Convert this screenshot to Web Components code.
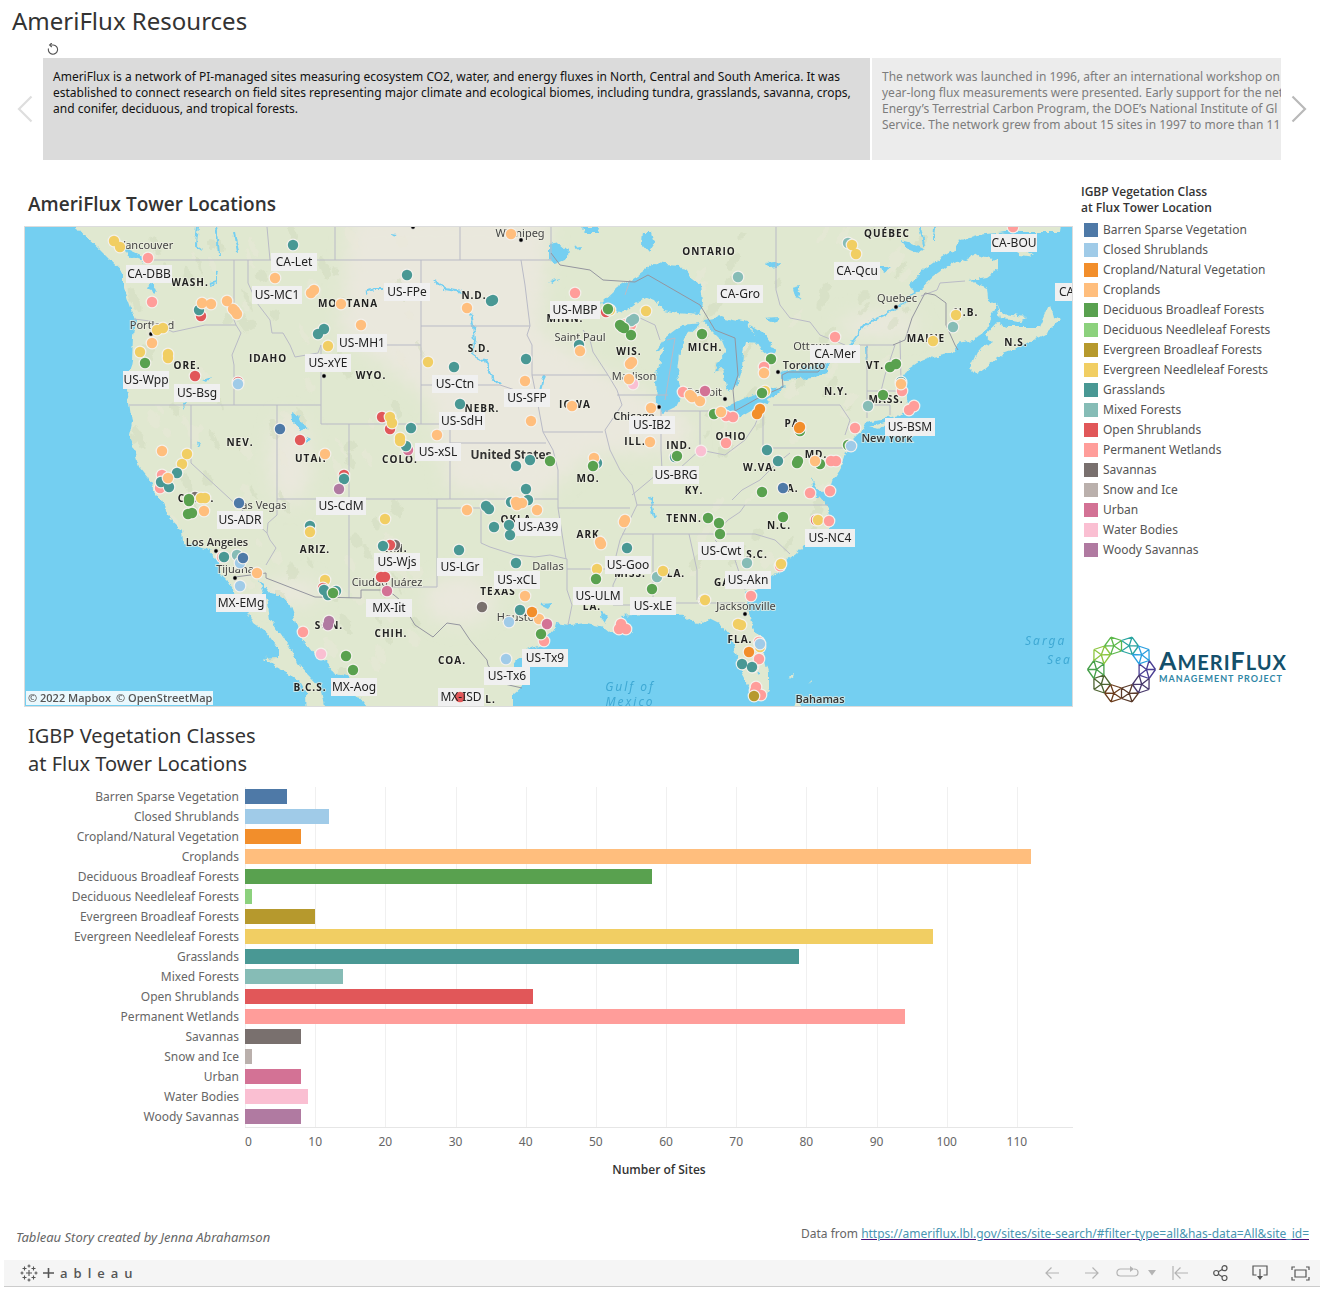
<!DOCTYPE html>
<html lang="en">
<head>
<meta charset="utf-8">
<title>AmeriFlux Resources</title>
<style>
body{margin:0;background:#fff;color:#333;font-family:"Noto Sans","Open Sans",sans-serif;font-size:12px;line-height:16px}
</style>
</head>
<body>
<story-page></story-page>
<script>
const CLASSES=[
 ['Barren Sparse Vegetation','#4e79a7',6],['Closed Shrublands','#a0cbe8',12],['Cropland/Natural Vegetation','#f28e2b',8],
 ['Croplands','#ffbe7d',112],['Deciduous Broadleaf Forests','#59a14f',58],['Deciduous Needleleaf Forests','#8cd17d',1],
 ['Evergreen Broadleaf Forests','#b6992d',10],['Evergreen Needleleaf Forests','#f1ce63',98],['Grasslands','#499894',79],
 ['Mixed Forests','#86bcb6',14],['Open Shrublands','#e15759',41],['Permanent Wetlands','#ff9d9a',94],['Savannas','#79706e',8],
 ['Snow and Ice','#bab0ac',1],['Urban','#d37295',8],['Water Bodies','#fabfd2',9],['Woody Savannas','#b07aa1',8]];

function define(name,html){
  customElements.define(name,class extends HTMLElement{
    constructor(){super();this.attachShadow({mode:'open'});}
    connectedCallback(){this.shadowRoot.innerHTML=typeof html==='function'?html(this):html;}
  });
}

define('story-point',`<style>
:host{display:block;flex:0 0 calc((100% + 416px)/2);box-sizing:border-box;height:102px;padding:11px 10px;background:#ececec;color:#7c7c7c;white-space:nowrap}
:host([active]){background:#dbdbdb;color:#111}
</style><slot></slot>`);

define('story-nav',`<style>
:host{display:block}
.reset{margin:0 0 3px 47px}
button{border:0;background:none;padding:0;display:block;line-height:0}
.row{display:flex;align-items:center}
.arrow{flex:0 0 auto;width:43px;display:flex;justify-content:center}
.arrow.next{width:48px;justify-content:flex-start;padding-left:10px}
.arrow.prev{padding-left:7px}
.strip{flex:1;min-width:0;display:flex;gap:2px;overflow:hidden}
</style>
<button class="reset" aria-label="Revert"><svg width="12" height="12" viewBox="0 0 12 12" fill="none" stroke="#555" stroke-width="1.1"><path d="M1.5 5.5A4.6 4.6 0 1 0 6.3 2H3"/><path d="M4.8 0 2.6 2l2.2 2"/></svg></button>
<div class="row">
<button class="arrow prev" aria-label="Previous story point"><svg width="16" height="28" viewBox="0 0 16 28" fill="none" stroke="#dedede" stroke-width="2.2"><path d="M14.5 1.500 2 14l12.500 12.500"/></svg></button>
<div class="strip"><slot></slot></div>
<button class="arrow next" aria-label="Next story point"><svg width="16" height="28" viewBox="0 0 16 28" fill="none" stroke="#b9b9b9" stroke-width="2.2"><path d="M1.500 1.500 14 14 1.500 26.500"/></svg></button>
</div>`);

define('color-legend',()=>`<style>
:host{display:block}
h3{margin:0 0 4px;font:600 12px/16px "Open Sans",sans-serif;color:#333}
ul{margin:0;padding:0 0 0 3px;list-style:none}
li{display:flex;align-items:center;gap:5px;height:20px;color:#555}
i{width:14px;height:14px}
</style><h3>IGBP Vegetation Class<br>at Flux Tower Location</h3><ul>${CLASSES.map(c=>`<li><i style="background:${c[1]}"></i>${c[0]}</li>`).join('')}</ul>`);

define('ameriflux-logo',()=>{
  const p=(r,d)=>[34.500+r*Math.cos(d*Math.PI/180),34.500+r*Math.sin(d*Math.PI/180)];
  const wheel=['#4b3f94','#48386b','#5a3a2a','#6b3c1c','#4d6330','#46a04a','#8cc63f','#5cb84a','#2aa5a0','#2a9fe0'];
  let s='';
  for(let k=0;k<10;k++){
    const a=36*k,O=p(34,a),I=p(25,a),M=p(29,a+18),N=p(29,a-18),J=p(18.500,a+18),K=p(18.500,a-18);
    const l=(u,v)=>`M${u.map(n=>n.toFixed(1))}L${v.map(n=>n.toFixed(1))}`;
    s+=`<path stroke="${wheel[k]}" d="${l(O,M)+l(O,N)+l(O,I)+l(I,M)+l(I,N)+l(I,J)+l(I,K)+l(M,J)+l(J,K)}"/>`;
  }
  return `<style>:host{display:block}svg{display:block}text{font-family:Lato,sans-serif;font-weight:700}</style>
<svg width="204" height="70" viewBox="0 0 204 70" role="img" aria-label="AmeriFlux Management Project"><g fill="none" stroke-width="1.300">${s}</g>
<text x="72" y="35" fill="#14506b" font-size="20" letter-spacing="1"><tspan font-size="25">A</tspan>MERI<tspan font-size="25">F</tspan>LUX</text>
<text x="72" y="47" fill="#2f86a6" font-size="9" letter-spacing="1">MANAGEMENT PROJECT</text></svg>`;});

define('bar-chart',()=>`<style>
:host{display:block}
h2{margin:0 0 9px 4px;font-size:20px;line-height:28px;font-weight:400;color:#333}
.chart{display:grid;grid-template-columns:215px minmax(0,1fr);column-gap:6px;color:#666}
.names{text-align:right;line-height:20px;white-space:nowrap}
.plot{border-bottom:1px solid #e6e6e6;background:repeating-linear-gradient(to right,#f0f0f0 0 1px,transparent 1px calc(100%*10/118))}
.slot{height:20px;padding-top:2px;box-sizing:border-box}
.bar{height:15px}
.ticks{grid-column:2;display:grid;grid-template-columns:5fr repeat(11,10fr) 3fr;padding-top:6px;text-align:center}
.ticks span:first-child{text-align:left}
.axis{grid-column:2;text-align:center;padding-top:12px;color:#333;font:600 12px/16px "Open Sans",sans-serif}
</style>
<h2>IGBP Vegetation Classes<br>at Flux Tower Locations</h2>
<div class="chart"><div class="names">${CLASSES.map(c=>`<div>${c[0]}</div>`).join('')}</div>
<div class="plot">${CLASSES.map(c=>`<div class="slot"><div class="bar" style="width:${(c[2]/1.18).toFixed(2)}%;background:${c[1]}"></div></div>`).join('')}</div>
<div class="ticks">${[0,10,20,30,40,50,60,70,80,90,100,110].map(n=>`<span>${n}</span>`).join('')}</div>
<div class="axis">Number of Sites</div></div>`);

const LAND=[
 'M60 216 77 227 87 238 100 250 110 260 123 272 123 283 128 300 135 320 133 337 132 360 127 387 129 403 132 423 129 437 135 450 140 467 148 477 155 492 163 503 167 515 182 530 183 542 193 545 207 548 215 557 220 573 227 580 233 590 238 600 247 610 253 623 267 633 277 647 277 657 265 658 273 665 287 673 300 682 306 693 307 720 327 720 322 690 310 677 297 663 293 653 283 637 270 620 268 603 263 590 260 580 270 593 280 595 290 603 297 623 303 640 313 653 327 663 333 673 350 677 353 690 367 707 372 720 513 720 513 695 522 687 520 673 513 666 517 660 527 650 540 645 553 630 555 623 570 625 587 623 603 627 610 633 633 633 623 620 620 616 633 615 653 613 680 613 697 625 710 618 720 623 730 635 735 653 740 668 745 677 750 690 753 700 763 700 768 690 768 673 763 653 758 637 752 623 748 610 747 593 757 588 770 577 783 570 787 560 797 553 803 545 820 537 830 527 828 507 820 497 830 485 840 470 845 453 853 440 863 430 866 422 887 418 900 415 910 407 903 390 902 377 907 370 917 363 933 357 953 353 958 343 973 340 987 330 990 317 996 306 988 300 987 287 968 280 987 277 997 270 997 260 977 255 953 263 933 277 917 292 910 285 923 270 940 258 953 250 960 240 977 235 1007 232 1060 232 1062 216Z',
 'M970 367 978 350 992 342 985 336 997 323 1007 327 1040 327 1050 305 1053 317 1060 320 1047 333 1020 347 1003 353 983 370 977 374Z',
 'M997 305 1003 314 1027 317 1020 321 1000 319Z','M1008 246 1024 248 1034 256 1020 254Z','M868 428 890 421 880 430Z','M795 707 798 700 803 707Z','M789 677 794 675 793 678Z','M809 681 811 679 810 685Z'];
const LAKES=[
 'M600 303 617 287 637 275 653 263 680 265 690 277 701 285 703 303 700 315 677 313 663 310 655 300 647 297 637 302 627 310 617 312Z',
 'M667 337 683 325 700 323 687 335 680 353 678 373 682 393 675 407 663 413 657 403 656 380 660 360 664 348 655 353Z',
 'M703 320 720 317 747 323 752 332 760 343 745 342 743 352 742 370 737 387 727 391 722 368 715 371 718 362 727 352 722 340 712 330Z',
 'M750 325 763 333 776 350 772 358 762 350Z','M721 412 730 405 747 397 767 390 785 386 775 396 757 407 740 417 725 417Z',
 'M779 373 795 369 827 362 827 372 813 378 785 380Z','M643 232 652 232 655 243 649 252 642 244Z','M549 245 560 243 568 250 567 258 556 263 549 258Z',
 'M291 411 299 415 303 425 308 427 299 430 292 420Z','M307 437 311 439 307 443Z','M122 245 130 250 143 256 146 264 140 260 128 256Z','M147 286 153 281 157 292 154 295 151 288Z',
 'M549 282 560 279 553 284Z','M580 227 600 227 598 233 586 233Z','M574 246 582 245 580 250Z','M392 234 398 235 393 237Z','M880 265 890 268 884 272Z','M900 240 908 242 925 250 918 253 906 248Z','M793 288 801 286 797 296 802 300 795 297Z','M766 264 780 262 778 267 770 268Z','M763 318 778 317 775 322Z',
 'M540 605 552 604 548 609Z','M602 611 609 618 606 624 601 617Z','M811 475 816 488 824 495 818 499 812 486Z','M757 670 762 672 759 676Z','M203 380 211 377 207 382Z','M183 405 187 404 184 409Z','M196 440 200 445 197 446Z'];
const RIVERS='M917 290 900 305 884 315 868 322 850 345M471 313 473 325 475 340 472 353 485 362 493 378 502 385M434 279 445 289 462 292M198 227 196 245 202 250M215 228 218 240 219 258M234 232 238 253M218 269 216 282 210 284M365 292 375 289 384 289M866 347 867 365M650 497 655 518M920 227 924 245M935 227 934 240M545 375 540 395';
const BORDERS='M149 260H551V227M267 227 270 260M335 227V260M460 227V260M234 260V320L236 325M248 260V283L257 303 270 320 272 333 283 333 290 345 295 357 318 353 321 345M321 345V424H450V443H546M421 260V424M340 345H421M134 319 150 321 173 332 205 325H236L241 333 232 355 234 365V405M129 405H321M191 405V463L267 533 270 540 276 548 266 565M277 405V515L268 523 267 533M277 499H558M349 424V598M450 443V499M437 499V587H388M437 508H481V543L490 547 515 555 535 557 550 555 567 559V590L572 605 568 625M567 569H613M558 470V508L566 559M558 508H630M421 326H530M421 385H500L530 395M521 260 525 285 528 310 530 326 527 335 532 345V375L538 405 543 432 553 450 558 470M532 375H608M543 432H603M583 330 590 340 593 352 608 375 617 390 622 405 605 430 610 450 620 470 632 485 637 505 620 540 615 560 620 570 613 585V605H635L640 613M617 395H668M661 410V450L662 470M700 411V450M665 411H720M632 495 650 480 662 470 680 468 700 450 725 455 745 440 755 425 763 405M637 505H828M622 534H755L775 540 790 554M653 534V615M689 534 697 570V600M651 603H745M763 405V448H845M773 405H840L850 420 845 435M860 345H895M867 345V391H902M880 395 885 375 895 345M900 340 901 380M867 391V418M867 405H890V415M776 227V290L780 305 790 318 810 322 820 335 845 345M625 295 630 280M640 318 655 325 660 340M667 340 675 338 670 370 665 400M715 534 728 520 740 512 745 505M715 540 735 560 745 590M732 500 742 490 760 480 775 465 790 453M921 296 937 290 940 283 965 281';
const NATIONAL='M235 577 266 573 266 578 315 597 361 598V590H388M388 590 400 600 415 625 433 637 447 623 460 625 470 640 487 660 488 665 500 683 522 688M551 253 560 265 590 270 603 280 635 282 648 275 700 305 715 330 735 338 738 375 733 390 735 411 760 397 783 387 782 375 788 372H818L832 355 860 345M893 345 905 340 912 318 925 293 935 295 946 303V325L955 345 958 350';
const STATES=[['WASH.',190,282],['ORE.',187,365],['IDAHO',268,358],['MONTANA',348,303],['WYO.',371,375],['N.D.',474,295],['S.D.',479,348],['NEBR.',482,408],['MINN.',565,318],['WIS.',629,351],['MICH.',705,347],['IOWA',575,404],['ILL.',635,441],['IND.',679,445],['OHIO',731,436],['N.Y.',836,391],['PA.',794,423],['MASS.',886,399],['VT.',875,365],['MAINE',926,338],['N.B.',966,312],['N.S.',1016,342],['QUÉBEC',887,233],['ONTARIO',709,251],['NEV.',240,442],['UTAH',311,458],['COLO.',400,459],['CALIF.',196,498],['ARIZ.',315,549],['N.M.',394,548],['TEXAS',498,591],['OKLA.',518,519],['ARK.',590,534],['MO.',588,478],['KY.',694,490],['TENN.',684,518],['N.C.',779,525],['S.C.',757,554],['W.VA.',760,467],['VA.',789,488],['MD.',816,454],['GA.',724,582],['ALA.',672,573],['MISS.',630,573],['LA.',592,606],['FLA.',740,639],['CHIH.',391,633],['COA.',452,660],['SON.',329,625],['B.C.S.',310,687],['N.L.',484,699]];
const CITIES=[['Vancouver',146,245],['Portland',152,325],['Winnipeg',520,233],['Saint Paul',580,337],['Madison',634,376],['Detroit',704,392],['Ottawa',812,346],['Quebec',897,298],['Las Vegas',261,505],['Tijuana',235,569],['Ciudad Juárez',387,582],['Dallas',548,566],['Houston',519,617],['Jacksonville',746,606]];
const MAJOR=[['Chicago',634,416],['Toronto',804,365],['New York',887,438],['Los Angeles',217,542],['Bahamas',820,699]];
const CAPITALS=[[413,227],[521,240],[151,334],[324,376],[896,307],[778,372],[725,399],[659,407],[216,551],[235,578],[745,614]];
const TOWERS=[['CA-DBB',149,274],['CA-Let',294,262],['US-MC1',277,295],['US-FPe',407,292],['US-MH1',362,343],['US-xYE',328,363],['US-Wpp',146,380],['US-Bsg',197,393],['US-MBP',575,310],['US-Ctn',455,384],['US-SFP',527,398],['US-SdH',462,421],['US-xSL',438,452],['US-IB2',652,425],['US-BRG',676,475],['CA-Gro',740,294],['CA-Qcu',857,271],['CA-BOU',1014,243],['CA-Mer',835,354],['US-BSM',910,427],['US-CdM',341,506],['US-ADR',240,520],['US-Wjs',397,562],['US-LGr',460,567],['US-A39',538,527],['US-xCL',517,580],['US-Goo',628,565],['US-ULM',598,596],['US-xLE',653,606],['US-Cwt',721,551],['US-NC4',830,538],['US-Akn',748,580],['MX-EMg',241,603],['MX-Iit',389,608],['MX-Aog',354,687],['MX-ISD',461,697],['US-Tx6',507,676],['US-Tx9',545,658]];
/* Tower sites: class index, then x y pairs. Later entries lie over earlier ones. */
const SITES=[
 [7,114,241,120,247],[11,148,258,152,302],[8,293,245],[3,275,278,314,290,311,293,341,304,361,325],[8,324,329,318,334],[7,328,346],
 [10,201,316],[8,199,310],[3,202,303,211,304,227,301,233,309,235,311,237,314],[7,163,328,157,330],[3,152,343],[7,140,352],[4,145,363],[7,168,354,168,358],[10,195,376,238,382],[1,238,384],
 [0,280,429],[10,300,440],[3,325,454,162,451],[7,187,454,182,464],[8,177,473],[11,162,475,160,488],[8,161,482,169,487],[3,168,478],
 [12,195,497],[7,201,498,205,498],[4,189,501,189,499,188,514,192,513],[3,204,511],[0,239,503],[10,344,475],[8,344,479],[16,339,489],[8,310,526],[7,310,532],
 [11,222,557],[8,224,557],[9,237,555],[1,240,563],[0,243,558],[3,257,573],[1,240,586],[7,325,580],[10,323,588],[8,324,590,328,595,336,591],[4,333,593],
 [16,329,621,328,625],[11,303,632],[15,321,654],[4,346,656,353,670],
 [8,407,275,491,301,493,300],[3,467,308,511,234],[11,575,293],[10,606,312],[7,610,310],[4,608,309],[7,646,311],[11,626,324,631,325],[9,631,321,634,319],[4,620,325,622,327,624,328,631,335,702,334],
 [8,579,345],[3,580,351],[7,428,362],[8,454,367,526,359],[3,525,381,572,406,531,421,630,364,632,362],[15,633,384],[3,629,379,651,408],[11,683,392],[8,692,397],[3,690,395,692,397,700,401],[14,705,391],
 [3,650,442],[15,701,451],[8,675,457],[4,677,456],[11,726,443],[8,460,404],[10,390,429,382,417],[7,390,417,392,423],[8,411,428],[14,408,450],[8,406,446],[7,400,438,400,441],[3,437,435],
 [8,516,466,530,460],[4,550,461],[8,597,463],[3,594,458],[4,593,466],
 [7,385,519],[12,395,545],[10,390,545],[8,383,546],[10,381,577,385,577],[14,387,591],[8,459,550],[3,467,510],[8,486,506,489,509,494,527,526,489,511,502,528,500],[3,522,503,516,502,517,505,537,510],[8,509,525,510,535,516,563],
 [3,525,596],[12,482,607],[8,520,610],[3,539,619],[2,532,612],[1,509,622],[14,547,624],[11,544,641],[4,541,634],[1,506,659],[10,460,697],
 [3,624,522,625,520,600,542,601,544],[8,627,548],[7,597,569],[4,596,579],[11,621,624,619,629,626,629],[9,657,577],[7,663,571],[4,652,589,708,518,719,523,720,534],[12,704,600],[7,705,600],
 [9,848,243],[7,852,245,856,254],[11,1013,227],[9,738,277],[7,956,315],[9,953,327],[7,933,341],[11,835,337],[4,771,359],[11,764,367],[3,764,373],[7,765,391],[4,762,393,890,367,896,364],
 [11,902,391],[8,901,382],[3,901,384],[4,883,395],[9,868,406],[11,914,406,909,410],[2,760,409,757,414],[4,714,414],[11,726,416,733,417],[3,721,412],[4,800,431],[2,799,428,800,427],[11,855,428],[4,848,445],[1,851,446],
 [8,767,450,778,461],[4,797,463,798,461,820,464],[3,815,461],[11,831,461,836,461],[4,762,492],[0,783,488],[11,810,493,830,491],[4,783,517],[10,816,520],[7,818,520],[11,829,521,780,566],[7,781,564],[9,747,563],[11,751,596],
 [7,738,624,741,625,760,647],[11,759,642],[1,760,644],[2,749,652],[11,759,659,753,667],[8,742,664,752,667],[11,756,687,755,691,761,695],[6,754,696]];

define('tower-map',()=>{
  const t=(list,cls)=>list.map(([s,x,y])=>`<text class="${cls}" x="${x}" y="${y+4}">${s}</text>`).join('');
  const half=s=>/[MN]/.test(s.slice(3))?25:23;
  let seed=7;const rnd=()=>(seed=(seed*16807)%2147483647)/2147483647;
  let relief='';
  for(let i=0;i<230;i++){
    const west=rnd()<.65,x=west?125+rnd()*300:690+rnd()*250,y=232+rnd()*440;
    relief+=`<ellipse cx="${x.toFixed()}" cy="${y.toFixed()}" rx="${(2+rnd()*4).toFixed()}" ry="${(4+rnd()*9).toFixed()}" transform="rotate(${west?-25:35} ${x.toFixed()} ${y.toFixed()})" fill="${rnd()<.5?'#cdd7b8':'#ebe8d9'}"/>`;
  }
  return `<style>
:host{display:block;box-sizing:border-box;border:1px solid #dcdcdc}
svg{display:block;width:100%;height:auto}
text{font-family:"Noto Sans","Open Sans",sans-serif;text-anchor:middle}
.state{font:700 10px "Open Sans",sans-serif;letter-spacing:1px;fill:#222}
.city{font-size:11px;fill:#444}
.major{font:600 11px "Open Sans",sans-serif;fill:#333}
.country{font:700 12px "Open Sans",sans-serif;fill:#333}
.city,.major,.country,.state{paint-order:stroke;stroke:#eef0e2;stroke-width:2px;stroke-opacity:.7}
.sea{font-style:italic;font-size:12px;letter-spacing:2px;fill:#3fa9d4}
.start{text-anchor:start}
.tower{font-size:12px;fill:#222}
.credit{font:600 11px "Open Sans",sans-serif;fill:#555;text-anchor:start}
</style>
<svg viewBox="25 227 1047 479" role="img" aria-label="AmeriFlux tower locations">
<defs><filter id="rough" x="-5%" y="-5%" width="110%" height="110%"><feTurbulence type="fractalNoise" baseFrequency=".12" numOctaves="3" seed="4"/><feDisplacementMap in="SourceGraphic" scale="7" xChannelSelector="R" yChannelSelector="G"/></filter>
<filter id="soft" x="-20%" y="-20%" width="140%" height="140%"><feGaussianBlur stdDeviation="9"/></filter>
<clipPath id="land"><path d="${LAND[0]}"/></clipPath></defs>
<rect x="25" y="227" width="1048" height="480" fill="#74cff1"/>
<g filter="url(#rough)"><path d="${LAND.join('')}" fill="#e0e8d0"/>
<g clip-path="url(#land)"><g filter="url(#soft)" fill="#eae8dd"><path d="M350 215 551 215 540 330 620 380 690 420 690 450 590 455 540 500 450 490 430 400 340 330Z"/><ellipse cx="290" cy="460" rx="20" ry="45"/><ellipse cx="290" cy="592" rx="30" ry="12"/><ellipse cx="880" cy="325" rx="40" ry="12"/><ellipse cx="460" cy="600" rx="35" ry="25"/></g><g opacity=".4">${relief}</g></g>
<path d="${LAKES.join('')}" fill="#74cff1"/><path d="${RIVERS}" fill="none" stroke="#74cff1" stroke-width="2"/></g>
<path d="${BORDERS}" fill="none" stroke="#b9bac6" stroke-width="1"/><path d="${NATIONAL}" fill="none" stroke="#94959f" stroke-width="1"/>
${CAPITALS.map(c=>`<circle cx="${c[0]}" cy="${c[1]}" r="2.200" fill="#000" stroke="#eee" stroke-width=".6"/>`).join('')}
${t(STATES,'state')}${t(CITIES,'city')}${t(MAJOR,'major')}${t([['United States',511,455]],'country')}
${t([['Gulf of',630,687],['Mexico',630,702]],'sea')}${t([['Sarga',1025,641],['Sea',1047,660]],'sea start')}
${TOWERS.map(([s,x,y])=>`<rect x="${x-half(s)}" y="${y-9}" width="${2*half(s)}" height="18" fill="#f0f0f0"/>`).join('')}
<rect x="1055" y="283" width="30" height="18" fill="#f0f0f0"/>
${SITES.map(([k,...p])=>{let s='';for(let i=0;i<p.length;i+=2)s+=`<circle cx="${p[i]}" cy="${p[i+1]}" r="6.400" fill="#f3f1ec"/>`;for(let i=0;i<p.length;i+=2)s+=`<circle cx="${p[i]}" cy="${p[i+1]}" r="5.200" fill="${CLASSES[k][1]}"/>`;return s}).join('')}
${t(TOWERS,'tower')}${t([['CA',1059,292]],'tower start')}
<rect x="26" y="691" width="187" height="14" fill="#fff" fill-opacity=".85"/><text class="credit" x="28" y="702">© 2022 Mapbox</text><text class="credit" x="116" y="702">© OpenStreetMap</text>
</svg>`;});

define('tableau-toolbar',()=>{
  const plus=(x,y,r)=>`M${x-r} ${y}h${2*r}M${x} ${y-r}v${2*r}`;
  return `<style>
:host{display:flex;align-items:center;height:26px;margin:0 9px 0 4px;padding-left:16px;background:#f5f5f5;border-bottom:1px solid #ccc}
.brand{display:flex;align-items:center;margin-right:auto;color:#555;text-decoration:none}
.word{display:flex;gap:6px;margin-left:5px;font:600 13px/18px "Open Sans",sans-serif}
button{border:0;padding:0;background:none;width:40px;height:26px;display:flex;align-items:center;justify-content:center}
.redo{width:32px}.caret{width:16px}
svg{display:block;fill:none;stroke:#555;stroke-width:1.200}
.dim svg{stroke:#b4b4b4}
</style>
<a class="brand" href="#" aria-label="Tableau"><svg width="18" height="18" viewBox="0 0 18 18" style="stroke-width:1.100"><path d="${plus(9,9,3)+plus(4.500,4.500,2)+plus(13.500,4.500,2)+plus(4.500,13.500,2)+plus(13.500,13.500,2)+plus(9,2,1.500)+plus(9,16,1.500)+plus(2,9,1.500)+plus(16,9,1.500)}"/></svg>
<span class="word"><svg width="11" height="18" viewBox="0 0 11 18" style="stroke-width:1.600"><path d="M0 9h11M5.500 4v10"/></svg><span>a</span><span>b</span><span>l</span><span>e</span><span>a</span><span>u</span></span></a>
<button class="dim" aria-label="Undo"><svg width="14" height="12"><path d="M14 6H1M6.500.500 1 6l5.500 5.500"/></svg></button>
<button class="dim" aria-label="Redo"><svg width="14" height="12"><path d="M0 6h13M7.500.500 13 6l-5.500 5.500"/></svg></button>
<button class="dim redo" aria-label="Replay"><svg width="24" height="14"><path d="M14 3H4.500a3.500 3.500 0 0 0-3.500 4c0 2 1.500 3 3.500 3h14c2 0 3.500-1 3.500-3.500S20 3 18 3"/><path d="M14 0v6l4-3z" fill="#b4b4b4" stroke="none"/></svg></button>
<button class="dim caret" aria-label="Replay speed"><svg width="8" height="6"><path d="M0 0h8L4 5.500z" fill="#b4b4b4" stroke="none"/></svg></button>
<button class="dim" aria-label="Reset"><svg width="16" height="14"><path d="M1 0v14M16 7H3M8.500 1.500 3 7l5.500 5.500"/></svg></button>
<button aria-label="Share"><svg width="15" height="16"><circle cx="3.200" cy="8" r="2.500"/><circle cx="11.500" cy="3.200" r="2.500"/><circle cx="11.500" cy="13" r="2.500"/><path d="M5.300 6.800 9.300 4.400M5.300 9.300l4 2.400"/></svg></button>
<button aria-label="Download"><svg width="16" height="16"><path d="M4.500 10H1V1h14v9h-3.500M8 4v8"/><path d="M5 11h6l-3 4z" fill="#555" stroke="none"/></svg></button>
<button aria-label="Full screen"><svg width="19" height="15"><path d="M4 1H1v3M15 1h3v3M4 14H1v-3M15 14h3v-3M4 4h11v7H4z"/></svg></button>`;});

define('story-page',`<style>
:host{display:block}
h1{margin:0;padding:5px 12px 6px;font-size:24px;line-height:32px;font-weight:400;color:#333}
main{display:grid;grid-template-columns:minmax(0,1fr) 240px;column-gap:8px;padding:24px 8px 0 24px}
h2{margin:0 0 2px 4px;font:600 19px/40px "Open Sans",sans-serif;color:#333}
aside{display:flex;flex-direction:column;justify-content:space-between;padding-bottom:2px}
ameriflux-logo{margin-left:6px}
bar-chart{margin-top:15px}
footer{display:flex;justify-content:space-between;padding:48px 20px 0 16px;color:#666;margin-bottom:15px}
em{padding-top:3px;font-size:13px}
a{color:#4996b2;text-decoration:underline;text-decoration-color:#4a0f7a}
</style>
<h1>AmeriFlux Resources</h1>
<story-nav>
<story-point active>AmeriFlux is a network of PI-managed sites measuring ecosystem CO2, water, and energy fluxes in North, Central and South America. It was<br>established to connect research on field sites representing major climate and ecological biomes, including tundra, grasslands, savanna, crops,<br>and conifer, deciduous, and tropical forests.</story-point>
<story-point>The network was launched in 1996, after an international workshop on<br>year-long flux measurements were presented. Early support for the net<br>Energy’s Terrestrial Carbon Program, the DOE’s National Institute of Gl<br>Service. The network grew from about 15 sites in 1997 to more than 11</story-point>
</story-nav>
<main><section><h2>AmeriFlux Tower Locations</h2><tower-map></tower-map></section>
<aside><color-legend></color-legend><ameriflux-logo></ameriflux-logo></aside>
<bar-chart></bar-chart></main>
<footer><em>Tableau Story created by Jenna Abrahamson</em><span>Data from <a href="https://ameriflux.lbl.gov/sites/site-search/#filter-type=all&has-data=All&site_id=">https://ameriflux.lbl.gov/sites/site-search/#filter-type=all&amp;has-data=All&amp;site_id=</a></span></footer>
<tableau-toolbar></tableau-toolbar>`);
</script>
</body>
</html>
